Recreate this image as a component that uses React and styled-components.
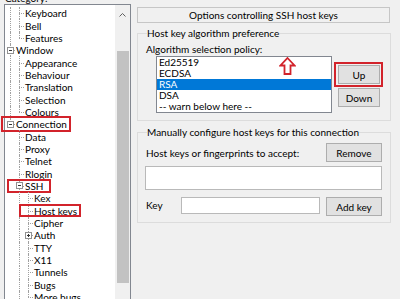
import React from 'react';
import styled, { createGlobalStyle } from 'styled-components';

const Global = createGlobalStyle`
  html, body { margin: 0; padding: 0; background: #f0f0f0; overflow: hidden; }
  body { font-family: Lato, "Noto Sans", sans-serif; font-size: 10px; color: #000; }
  * { box-sizing: border-box; }
`;

const Page = styled.div`
  display: flex;
  align-items: flex-start;
  width: 400px;
  height: 299px;
  overflow: hidden;
  background: #f0f0f0;
`;

const LeftCol = styled.div`
  flex: none;
  width: 131px;
  margin-top: -8px;
  padding-left: 4px;
  display: flex;
  flex-direction: column;
`;

const CatLabel = styled.div`
  height: 12px;
  line-height: 12px;
  padding-left: 1px;
`;

const TreeBox = styled.div`
  display: flex;
  height: 320px;
  background: #fff;
  border: 1px solid #828790;
`;

const TreeList = styled.div`
  flex: 1;
  padding: 2px 0 0 1px;
  display: flex;
  flex-direction: column;
`;

const Row = styled.div`
  position: relative;
  height: 12.35px;
  display: flex;
  align-items: stretch;
  white-space: nowrap;
`;

const Guide = styled.span`
  position: relative;
  flex: none;
  width: 9px;
  display: flex;
  align-items: center;
  justify-content: center;
  &::before {
    content: '';
    display: ${p => (p.$up || p.$down ? 'block' : 'none')};
    position: absolute;
    left: 4px;
    top: ${p => (p.$up ? '0' : '50%')};
    bottom: ${p => (p.$down ? '0' : '50%')};
    border-left: 1px dotted #a0a0a0;
  }
  &::after {
    content: '';
    display: ${p => (p.$right ? 'block' : 'none')};
    position: absolute;
    left: 4px;
    right: 0;
    top: 50%;
    border-top: 1px dotted #a0a0a0;
  }
`;

const Toggle = styled.span`
  position: relative;
  z-index: 1;
  width: 7px;
  height: 7px;
  margin-left: -1px;
  border: 1px solid #919191;
  background: #fff;
  display: flex;
  align-items: center;
  justify-content: center;
  &::before {
    content: '';
    width: 3px;
    height: 1px;
    background: #333;
  }
  &::after {
    content: '';
    display: ${p => (p.$plus ? 'block' : 'none')};
    position: absolute;
    width: 1px;
    height: 3px;
    background: #333;
  }
`;

const ItemText = styled.span`
  display: flex;
  align-items: center;
  padding-left: 1px;
  line-height: 12px;
`;

const Mark = styled.span`
  position: absolute;
  border: 2px solid #d2232b;
  pointer-events: none;
`;

const Scrollbar = styled.div`
  flex: none;
  width: 15px;
  background: #f0f0f0;
  display: flex;
  flex-direction: column;
`;

const ScrollArrow = styled.div`
  height: 20px;
  display: flex;
  align-items: center;
  justify-content: center;
`;

const Track = styled.div`
  flex: 1;
  padding: 26px 1px 0 2px;
`;

const Thumb = styled.div`
  height: 232px;
  background: #c2c2c2;
`;

const RightCol = styled.div`
  flex: none;
  width: 254px;
  margin-left: 6px;
  padding-top: 7px;
  display: flex;
  flex-direction: column;
`;

const Header = styled.div`
  height: 16px;
  border: 1px solid #c6c6c6;
  display: flex;
  align-items: center;
  justify-content: center;
  line-height: 12px;
  margin-right: 1px;
`;

const Group = styled.fieldset`
  margin: ${p => p.$top}px 0 0 0;
  padding: ${p => p.$pt}px 8px ${p => p.$pb}px 7px;
  border: 1px solid #dcdcdc;
  min-width: 0;
`;

const Legend = styled.legend`
  padding: 0 0 0 0;
  margin-left: 2px;
  line-height: 12px;
  height: 12px;
`;

const Label = styled.div`
  line-height: 12px;
  padding-left: 1px;
`;

const ListRow = styled.div`
  display: flex;
  align-items: flex-start;
  margin-top: 1px;
`;

const ListWrap = styled.div`
  position: relative;
  margin-left: 11px;
`;

const ListBox = styled.div`
  width: 176px;
  height: 57px;
  background: #fff;
  border: 1px solid #828790;
  display: flex;
  flex-direction: column;
  overflow: hidden;
`;

const ListItem = styled.div`
  flex: none;
  height: 11px;
  line-height: 11px;
  padding-left: 2px;
  background: ${p => (p.$selected ? '#0078d7' : 'transparent')};
  color: ${p => (p.$selected ? '#fff' : '#000')};
`;

const ArrowIcon = styled.svg`
  position: absolute;
  left: 123px;
  top: 1px;
`;

const ButtonCol = styled.div`
  display: flex;
  flex-direction: column;
  gap: 4px;
  margin-left: 6px;
  padding-top: 9px;
`;

const Button = styled.div`
  position: relative;
  width: ${p => p.$w}px;
  height: 19px;
  background: #e1e1e1;
  border: 1px solid #adadad;
  display: flex;
  align-items: center;
  justify-content: center;
  line-height: 12px;
`;

const ButtonMark = styled.span`
  position: absolute;
  left: -5px;
  right: -4px;
  top: -4px;
  bottom: -4px;
  border: 2px solid #d2232b;
`;

const SpreadRow = styled.div`
  display: flex;
  align-items: center;
  justify-content: space-between;
`;

const TextArea = styled.div`
  margin-top: 4px;
  height: 24px;
  background: #fff;
  border: 1px solid #b9b9b9;
`;

const KeyRow = styled.div`
  display: flex;
  align-items: flex-start;
  margin-top: 7px;
`;

const KeyLabel = styled.div`
  width: 36px;
  padding-left: 1px;
  line-height: 16px;
`;

const Input = styled.div`
  width: 139px;
  height: 17px;
  background: #fff;
  border: 1px solid #b9b9b9;
`;

const Spacer = styled.div`
  flex: 1;
`;

const N = {};
const L = { up: true, down: true };
const T = { up: true, down: true, right: true };
const E = { up: true, right: true };

const tree = [
  { text: 'Keyboard', g: [L, T] },
  { text: 'Bell', g: [L, T] },
  { text: 'Features', g: [L, E] },
  { text: 'Window', g: [{ up: true, down: true, box: 'minus' }] },
  { text: 'Appearance', g: [L, T] },
  { text: 'Behaviour', g: [L, T] },
  { text: 'Translation', g: [L, T] },
  { text: 'Selection', g: [L, T] },
  { text: 'Colours', g: [L, E] },
  { text: 'Connection', g: [{ up: true, box: 'minus' }], mark: { left: -5, width: 70, top: -2, height: 16 } },
  { text: 'Data', g: [N, T] },
  { text: 'Proxy', g: [N, T] },
  { text: 'Telnet', g: [N, T] },
  { text: 'Rlogin', g: [N, T] },
  { text: 'SSH', g: [N, { up: true, down: true, box: 'minus' }], mark: { left: 1, width: 44, top: -1, height: 14 } },
  { text: 'Kex', g: [N, L, T] },
  { text: 'Host keys', g: [N, L, T], mark: { left: 13, width: 62, top: -1, height: 13 } },
  { text: 'Cipher', g: [N, L, T] },
  { text: 'Auth', g: [N, L, { up: true, down: true, box: 'plus' }] },
  { text: 'TTY', g: [N, L, T] },
  { text: 'X11', g: [N, L, T] },
  { text: 'Tunnels', g: [N, L, T] },
  { text: 'Bugs', g: [N, L, T] },
  { text: 'More bugs', g: [N, L, E] },
];

const algos = ['Ed25519', 'ECDSA', 'RSA', 'DSA', '-- warn below here --'];

export default function App() {
  return (
    <>
      <Global />
      <Page>
        <LeftCol>
          <CatLabel>Category:</CatLabel>
          <TreeBox>
            <TreeList>
              {tree.map(r => (
                <Row key={r.text}>
                  {r.g.map((g, i) => (
                    <Guide key={i} $up={g.up} $down={g.down} $right={g.right || !!g.box}>
                      {g.box && <Toggle $plus={g.box === 'plus'} />}
                    </Guide>
                  ))}
                  <ItemText>{r.text}</ItemText>
                  {r.mark && (
                    <Mark
                      style={{ left: r.mark.left, width: r.mark.width, top: r.mark.top, height: r.mark.height }}
                    />
                  )}
                </Row>
              ))}
            </TreeList>
            <Scrollbar>
              <ScrollArrow>
                <svg width="7" height="4" viewBox="0 0 7 4">
                  <path d="M0.5 3.5 L3.5 0.5 L6.5 3.5" fill="none" stroke="#606060" strokeWidth="1" />
                </svg>
              </ScrollArrow>
              <Track>
                <Thumb />
              </Track>
            </Scrollbar>
          </TreeBox>
        </LeftCol>
        <RightCol>
          <Header>Options controlling SSH host keys</Header>
          <Group $top={4} $pt={4} $pb={7}>
            <Legend>Host key algorithm preference</Legend>
            <Label>Algorithm selection policy:</Label>
            <ListRow>
              <ListWrap>
                <ListBox>
                  {algos.map(a => (
                    <ListItem key={a} $selected={a === 'RSA'}>{a}</ListItem>
                  ))}
                </ListBox>
                <ArrowIcon width="17" height="18" viewBox="0 0 17 18">
                  <path
                    d="M8.5 1 L15.5 8.5 L11.5 8.5 L11.5 17 L5.5 17 L5.5 8.5 L1.5 8.5 Z"
                    fill="#fff"
                    stroke="#d2232b"
                    strokeWidth="1.8"
                    strokeLinejoin="miter"
                  />
                </ArrowIcon>
              </ListWrap>
              <ButtonCol>
                <Button $w={42}>
                  Up
                  <ButtonMark />
                </Button>
                <Button $w={42}>Down</Button>
              </ButtonCol>
            </ListRow>
          </Group>
          <Group $top={5} $pt={5} $pb={6}>
            <Legend>Manually configure host keys for this connection</Legend>
            <SpreadRow>
              <Label>Host keys or fingerprints to accept:</Label>
              <Button $w={56}>Remove</Button>
            </SpreadRow>
            <TextArea />
            <KeyRow>
              <KeyLabel>Key</KeyLabel>
              <Input />
              <Spacer />
              <Button $w={56}>Add key</Button>
            </KeyRow>
          </Group>
        </RightCol>
      </Page>
    </>
  );
}
